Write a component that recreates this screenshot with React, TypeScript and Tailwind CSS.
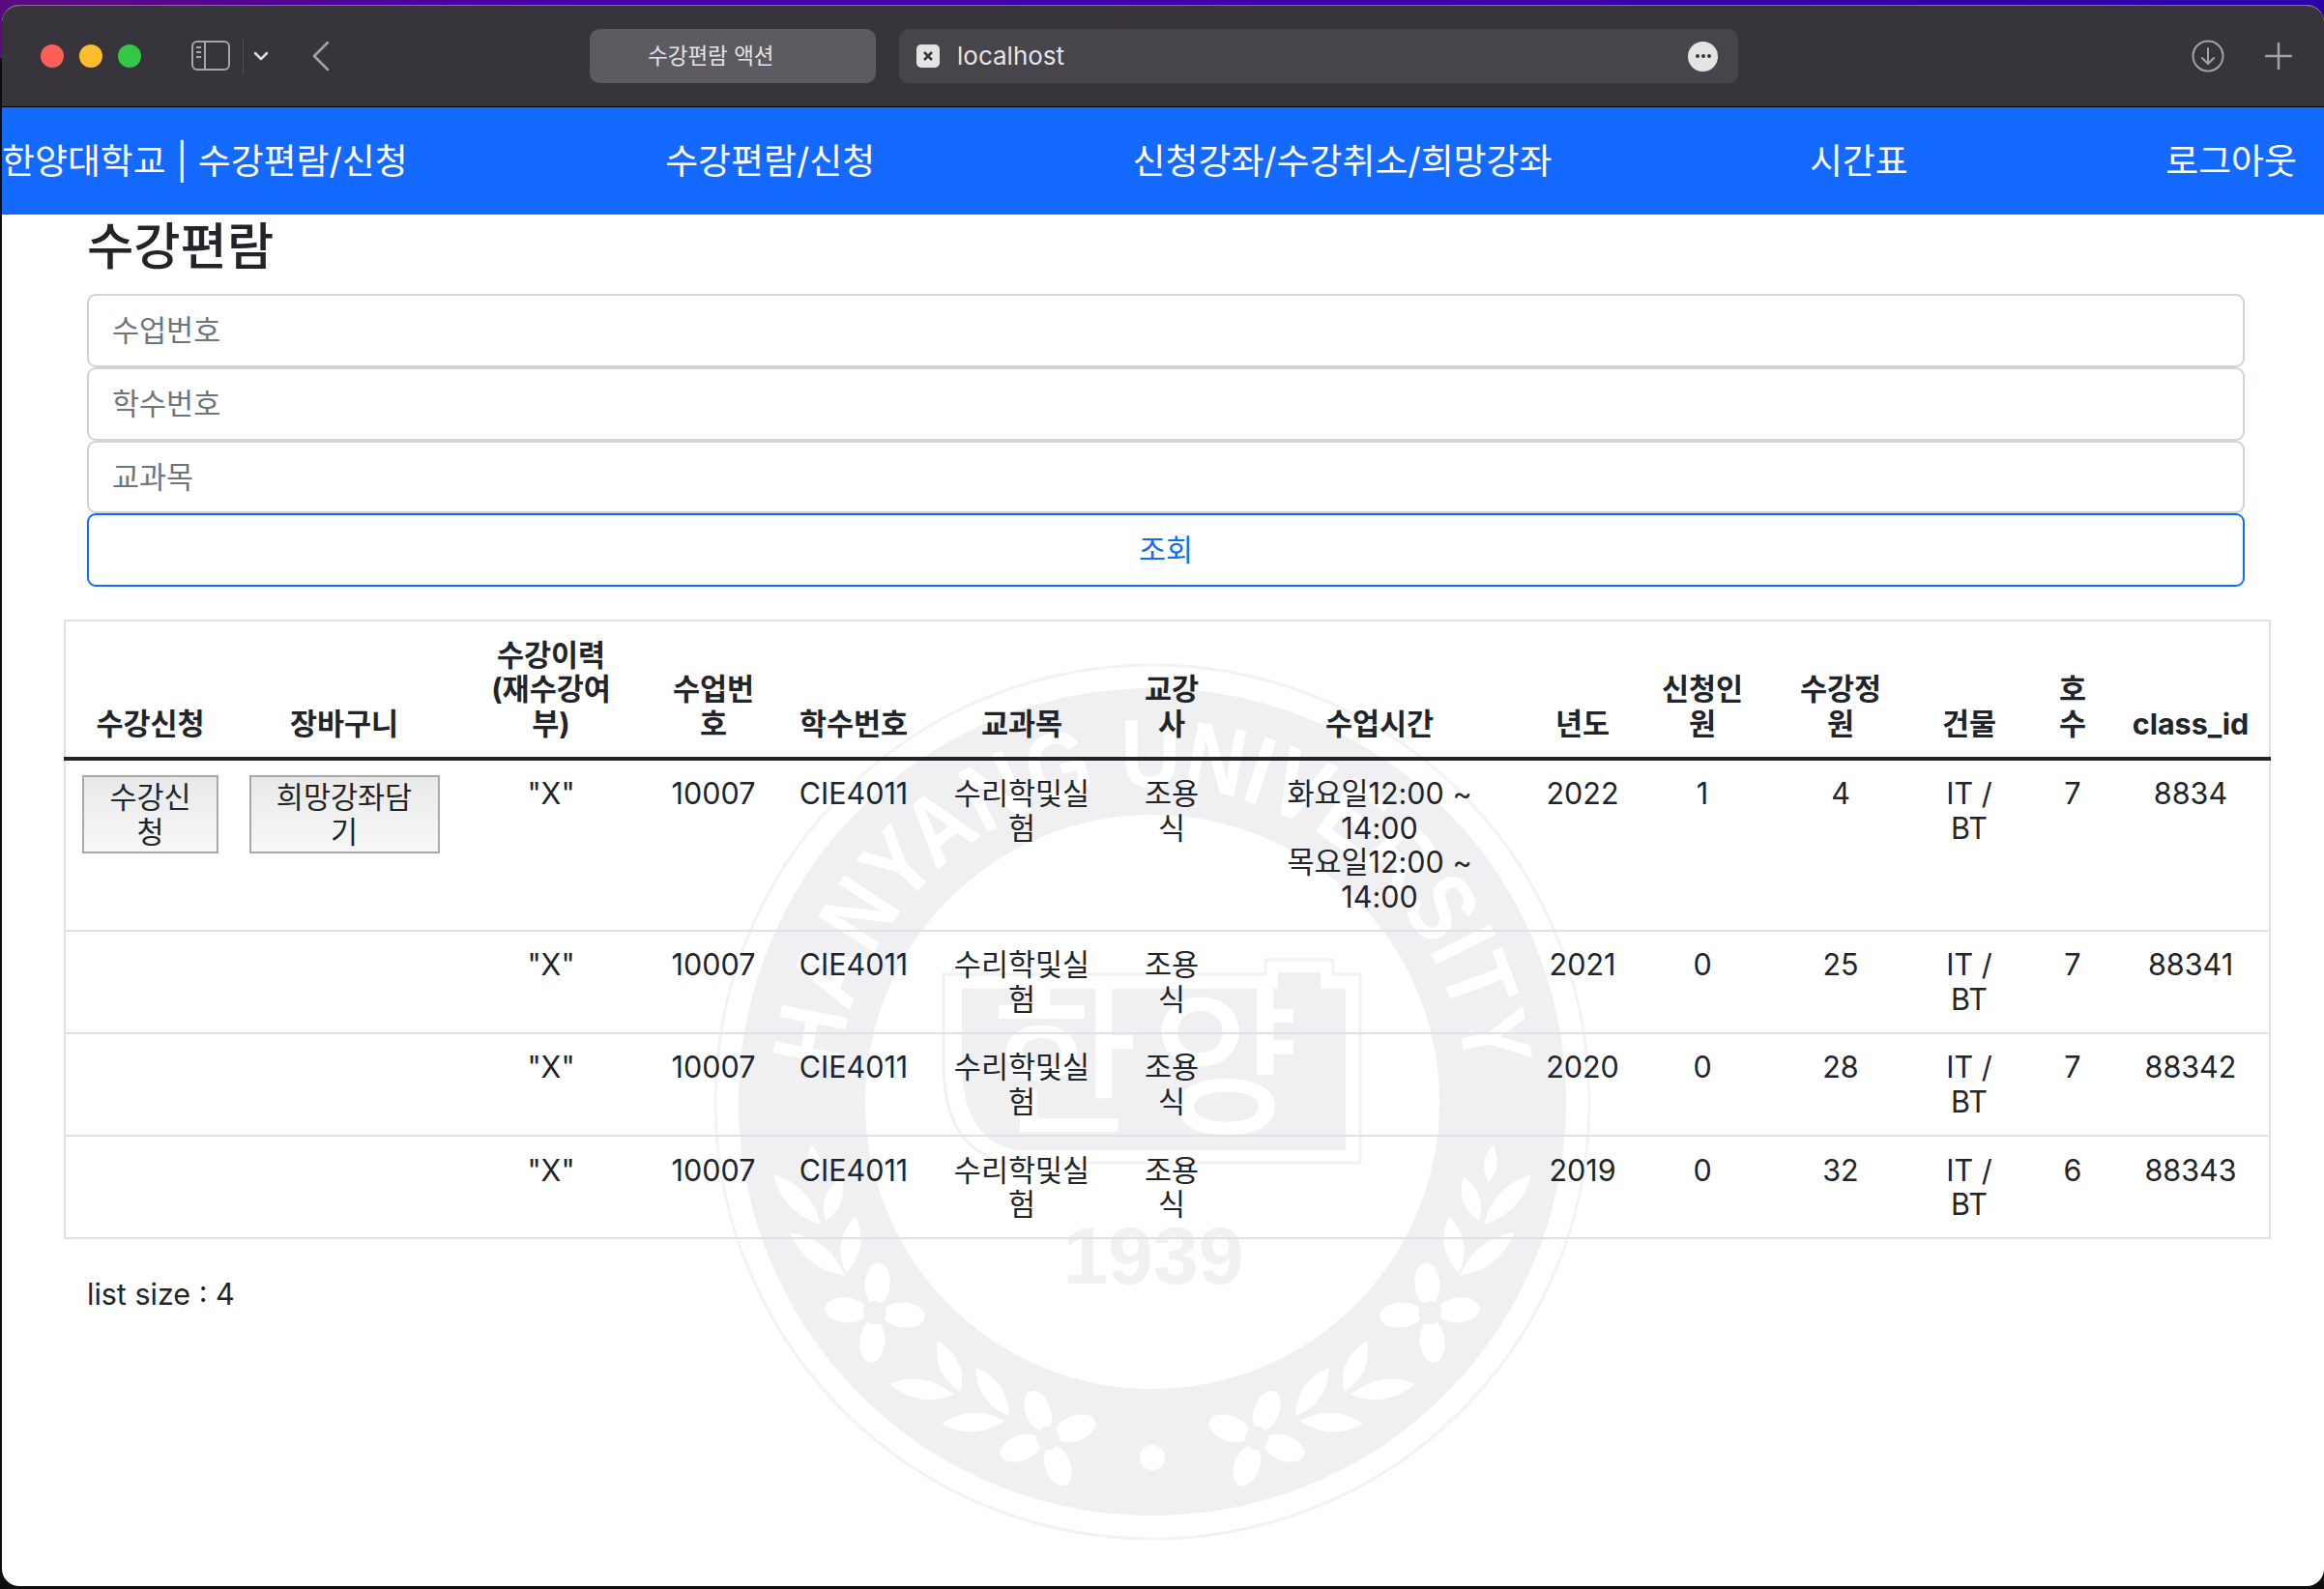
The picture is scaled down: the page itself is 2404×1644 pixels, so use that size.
import { Fragment } from 'react';

const columns = [
  { label: ['수강신청'], width: 'w-[176px]' },
  { label: ['장바구니'], width: 'w-[226px]' },
  { label: ['수강이력', '(재수강여', '부)'], width: 'w-[202px]' },
  { label: ['수업번', '호'], width: 'w-[134px]' },
  { label: ['학수번호'], width: 'w-[156px]' },
  { label: ['교과목'], width: 'w-[192px]' },
  { label: ['교강', '사'], width: 'w-[118px]' },
  { label: ['수업시간'], width: 'w-[312px]' },
  { label: ['년도'], width: 'w-[108px]' },
  { label: ['신청인', '원'], width: 'w-[140px]' },
  { label: ['수강정', '원'], width: 'w-[146px]' },
  { label: ['건물'], width: 'w-[120px]' },
  { label: ['호', '수'], width: 'w-[94px]' },
  { label: ['class_id'], width: 'w-[157px]' },
];

const rows = [
  { year: 2022, applied: 1, capacity: 4, room: 7, classId: 8834, first: true },
  { year: 2021, applied: 0, capacity: 25, room: 7, classId: 88341, first: false },
  { year: 2020, applied: 0, capacity: 28, room: 7, classId: 88342, first: false },
  { year: 2019, applied: 0, capacity: 32, room: 6, classId: 88343, first: false },
];

const navItems = ['한양대학교 | 수강편람/신청', '수강편람/신청', '신청강좌/수강취소/희망강좌', '시간표', '로그아웃'];

// [x1, y1, x2, y2] in screen pixels, left half of the seal
const leaves = [
  [968, 1387, 992, 1440],
  [918, 1432, 985, 1443],
  [1007, 1415, 1042, 1465],
  [972, 1473, 1037, 1470],
  [838, 1185, 842, 1223],
  [798, 1215, 847, 1267],
  [868, 1218, 852, 1263],
  [883, 1258, 873, 1317],
  [815, 1275, 872, 1320],
];

function leafPath([x1, y1, x2, y2]: number[]) {
  const mx = (x1 + x2) / 2;
  const my = (y1 + y2) / 2;
  const dx = x2 - x1;
  const dy = y2 - y1;
  const len = Math.hypot(dx, dy);
  const bulge = Math.min(20, len * 0.36);
  const nx = (-dy / len) * bulge;
  const ny = (dx / len) * bulge;
  return `M${x1} ${y1}Q${mx + nx} ${my + ny} ${x2} ${y2}Q${mx - nx} ${my - ny} ${x1} ${y1}Z`;
}

function Flower({ x, y, rotate }: { x: number; y: number; rotate: number }) {
  return (
    <g transform={`translate(${x} ${y}) rotate(${rotate})`}>
      <ellipse cx="0" cy="-30" rx="13" ry="22" fill="#ffffff" />
      <ellipse cx="0" cy="30" rx="13" ry="22" fill="#ffffff" />
      <ellipse cx="-30" cy="0" rx="22" ry="13" fill="#ffffff" />
      <ellipse cx="30" cy="0" rx="22" ry="13" fill="#ffffff" />
      <circle cx="0" cy="0" r="12" fill="#f0f0f2" />
    </g>
  );
}

function SealHalf() {
  return (
    <>
      {leaves.map((leaf, i) => (
        <path key={i} d={leafPath(leaf)} fill="#ffffff" />
      ))}
      <Flower x={903} y={1358} rotate={5} />
      <Flower x={1082} y={1488} rotate={-20} />
    </>
  );
}

function Seal() {
  return (
    <svg
      className="absolute left-[728px] top-[458px] w-[924px] h-[924px] pointer-events-none"
      viewBox="728 680 924 924"
    >
      <circle cx="1190" cy="1140" r="452" fill="none" stroke="#f3f3f5" strokeWidth="3" />
      <circle cx="1190" cy="1140" r="362.5" fill="none" stroke="#f0f0f2" strokeWidth="131" />
      <SealHalf />
      <g transform="translate(2380 0) scale(-1 1)">
        <SealHalf />
      </g>
      <circle cx="1190" cy="1508" r="13" fill="#ffffff" />
      <path id="seal-arc" d="M864 1140A326 326 0 0 1 1516 1140" fill="none" />
      <text fontFamily="Liberation Sans" fontWeight="700" fontSize="100" fill="#ffffff" textAnchor="middle">
        <textPath href="#seal-arc" startOffset="50%" textLength="960" lengthAdjust="spacingAndGlyphs">
          HANYANG UNIVERSITY
        </textPath>
      </text>
      <path
        d="M1307 1008V993H1377V1008H1405V1203H1040Q974 1190 974 1100V1008Z"
        fill="none"
        stroke="#f1f1f3"
        strokeWidth="3"
      />
      <path
        d="M993 1023H1320V1006H1364V1023H1390V1190H1048Q993 1178 993 1100Z"
        fill="#f0f0f2"
      />
      <text
        x="1190"
        y="1160"
        fontFamily="Noto Sans CJK KR"
        fontWeight="500"
        fontSize="165"
        letterSpacing="15"
        fill="#ffffff"
        textAnchor="middle"
      >
        한양
      </text>
      <text
        x="1191"
        y="1328"
        fontFamily="Liberation Sans"
        fontWeight="700"
        fontSize="84"
        fill="#f1f1f3"
        textAnchor="middle"
      >
        1939
      </text>
    </svg>
  );
}

function Toolbar() {
  return (
    <div className="h-[104px] shrink-0 flex items-center pl-[40px] bg-[#37343b] border-b border-black box-content text-[#e4e4e5]">
      <div className="flex gap-4">
        <div className="w-6 h-6 rounded-full bg-[#ff5f57]" />
        <div className="w-6 h-6 rounded-full bg-[#febc2e]" />
        <div className="w-6 h-6 rounded-full bg-[#33c748]" />
      </div>
      <svg className="ml-[52px]" width="40" height="32" viewBox="0 0 40 32" fill="none">
        <rect x="1" y="1" width="38" height="29" rx="5" stroke="#a8a6ab" strokeWidth="2" />
        <path d="M14 1V30" stroke="#a8a6ab" strokeWidth="2" />
        <path d="M5 7H10M5 12H10M5 17H10" stroke="#a8a6ab" strokeWidth="2" />
      </svg>
      <div className="ml-[13px] w-px h-[36px] bg-[#504e54]" />
      <svg className="ml-[10px]" width="16" height="10" viewBox="0 0 16 10" fill="none">
        <path d="M2 2L8 8L14 2" stroke="#dcdcdd" strokeWidth="2.5" strokeLinecap="round" strokeLinejoin="round" />
      </svg>
      <svg className="ml-[44px]" width="20" height="32" viewBox="0 0 20 32" fill="none">
        <path d="M17 2L3 16L17 30" stroke="#a5a3a8" strokeWidth="2.5" strokeLinecap="round" strokeLinejoin="round" />
      </svg>
      <div className="ml-[268px] w-[296px] h-14 rounded-[10px] bg-[#5d5a61] flex items-center pl-[60px] text-[22.5px]">
        수강편람 액션
      </div>
      <div className="ml-6 w-[868px] h-14 rounded-[10px] bg-[#47444b] flex items-center pl-[18px] text-[26px]">
        <div className="w-6 h-6 rounded-[5px] bg-[#e3e3e3] flex items-center justify-center">
          <svg width="12" height="12" viewBox="0 0 12 12" fill="none">
            <path d="M2 2L10 10M10 2L2 10" stroke="#37343b" strokeWidth="2.5" />
          </svg>
        </div>
        <span className="ml-[18px]">localhost</span>
        <div className="ml-auto mr-[21px] w-[31px] h-[31px] rounded-full bg-[#e4e4e4] flex items-center justify-center gap-[2px]">
          <div className="w-[4px] h-[4px] rounded-full bg-[#37343b]" />
          <div className="w-[4px] h-[4px] rounded-full bg-[#37343b]" />
          <div className="w-[4px] h-[4px] rounded-full bg-[#37343b]" />
        </div>
      </div>
      <svg className="ml-[469px]" width="34" height="34" viewBox="0 0 34 34" fill="none">
        <circle cx="17" cy="17" r="15.5" stroke="#a5a3a8" strokeWidth="2" />
        <path d="M17 9V25M11 19L17 25L23 19" stroke="#a5a3a8" strokeWidth="2" strokeLinecap="round" strokeLinejoin="round" />
      </svg>
      <svg className="ml-[42px]" width="28" height="28" viewBox="0 0 28 28" fill="none">
        <path d="M14 1V27M1 14H27" stroke="#a5a3a8" strokeWidth="2.5" strokeLinecap="round" />
      </svg>
    </div>
  );
}

export default function App() {
  return (
    <div className="relative w-[2404px] h-[1644px] overflow-hidden bg-[#0e0e10] font-['Inter','Noto_Sans_CJK_KR',sans-serif] text-[30.5px] leading-[35.4px] text-[#212529]">
      <div className="absolute top-0 left-0 right-0 h-[60px] bg-[linear-gradient(90deg,#5c0a80_0%,#4a00a4_22%,#2c00a8_100%)]" />
      <div className="relative mt-[5px] ml-[2px] h-[1636px] flex flex-col rounded-[18px] overflow-hidden bg-white border-t border-[#77757b]">
        <Toolbar />

        {/* Nav */}
        <nav className="h-[111px] shrink-0 bg-[#146aff] flex items-center justify-between pr-[28px] text-[36.9px] leading-[43px] text-white">
          {navItems.map((item) => (
            <span key={item}>{item}</span>
          ))}
        </nav>

        <main className="relative flex-1">
          <Seal />
          <div className="relative">
            <h2 className="pl-[88px] pt-[3px] text-[52.5px] leading-[61px] font-medium mb-[18px]">수강편람</h2>
            <div className="ml-[88px] mr-[82px] flex flex-col">
              {['수업번호', '학수번호', '교과목'].map((placeholder) => (
                <input
                  key={placeholder}
                  placeholder={placeholder}
                  className="h-[75.75px] w-full px-[24px] bg-white border-2 border-[#ced4da] rounded-[9px] placeholder:text-[#6c757d]"
                />
              ))}
              <button className="h-[75.75px] w-full bg-white border-2 border-[#0d6efd] rounded-[9px] text-[#0d6efd]">
                조회
              </button>
            </div>

            <table className="mt-[34px] ml-[64px] w-[2281px] table-fixed border-collapse border-2 border-[#dee2e6]">
              <colgroup>
                {columns.map((col) => (
                  <col key={col.label.join('')} className={col.width} />
                ))}
              </colgroup>
              <thead>
                <tr className="border-b-4 border-[#212529]">
                  {columns.map((col) => (
                    <th key={col.label.join('')} className="px-[6px] last:pr-[12px] py-[16.7px] align-bottom text-center font-bold">
                      {col.label.map((line) => (
                        <div key={line}>{line}</div>
                      ))}
                    </th>
                  ))}
                </tr>
              </thead>
              <tbody>
                {rows.map((row) => (
                  <tr key={row.classId} className="border-b-2 border-[#dee2e6] text-center align-top">
                    <td className="px-[6px] py-[16.7px]">
                      {row.first && (
                        <button className="block mx-auto -mt-[1px] w-[141px] h-[81px] bg-[linear-gradient(#e9e9e9,#f7f7f7)] border-2 border-[#a9a9a9]">
                          수강신
                          <br />청
                        </button>
                      )}
                    </td>
                    <td className="px-[6px] py-[16.7px]">
                      {row.first && (
                        <button className="block mx-auto -mt-[1px] w-[197px] h-[81px] bg-[linear-gradient(#e9e9e9,#f7f7f7)] border-2 border-[#a9a9a9]">
                          희망강좌담
                          <br />기
                        </button>
                      )}
                    </td>
                    <td className="px-[6px] py-[16.7px]">"X"</td>
                    <td className="px-[6px] py-[16.7px]">10007</td>
                    <td className="px-[6px] py-[16.7px]">CIE4011</td>
                    <td className="px-[6px] py-[16.7px]">
                      수리학및실
                      <br />험
                    </td>
                    <td className="px-[6px] py-[16.7px]">
                      조용
                      <br />식
                    </td>
                    <td className="px-[6px] py-[16.7px]">
                      {row.first && (
                        <Fragment>
                          <div>
                            화요일12:00 ~
                            <br />
                            14:00
                          </div>
                          <div>
                            목요일12:00 ~
                            <br />
                            14:00
                          </div>
                        </Fragment>
                      )}
                    </td>
                    <td className="px-[6px] py-[16.7px]">{row.year}</td>
                    <td className="px-[6px] py-[16.7px]">{row.applied}</td>
                    <td className="px-[6px] py-[16.7px]">{row.capacity}</td>
                    <td className="px-[6px] py-[16.7px]">
                      IT /
                      <br />
                      BT
                    </td>
                    <td className="px-[6px] py-[16.7px]">{row.room}</td>
                    <td className="px-[6px] pr-[12px] py-[16.7px]">{row.classId}</td>
                  </tr>
                ))}
              </tbody>
            </table>

            <p className="mt-[39px] pl-[88px]">list size : 4</p>
          </div>
        </main>
      </div>
    </div>
  );
}
